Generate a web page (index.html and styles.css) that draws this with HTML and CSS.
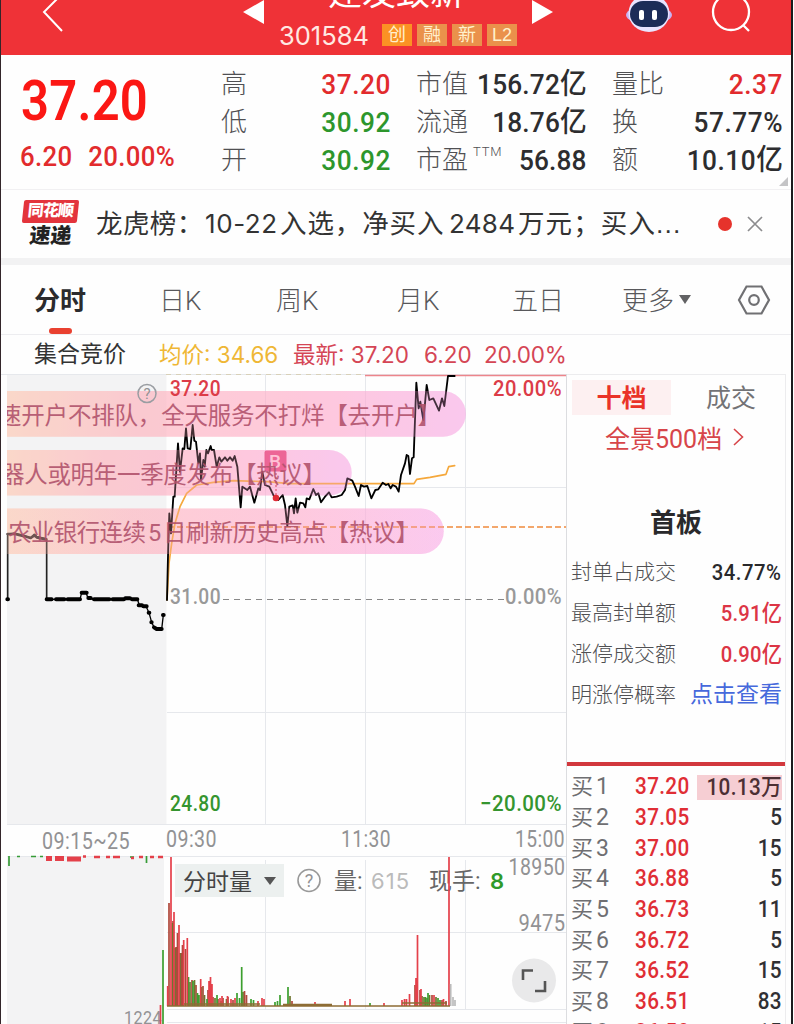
FILE: index.html
```html
<!DOCTYPE html>
<html lang="zh-CN">
<head>
<meta charset="utf-8">
<title>301584</title>
<link rel="stylesheet" href="styles.css">
</head>
<body>
<div class="app">
  <header class="top">
    <svg class="back" viewBox="0 0 24 40"><path d="M21 -3L2 16L20 35" /></svg>
    <svg class="prev" viewBox="0 0 22 24"><path d="M0 12L21 0V24Z"/></svg>
    <div class="title">
      <div class="name">建发致新</div>
      <div class="code"><span class="num">301584</span><i class="tag hot">创</i><i class="tag">融</i><i class="tag">新</i><i class="tag">L2</i></div>
    </div>
    <svg class="next" viewBox="0 0 22 24"><path d="M21 12L0 0V24Z"/></svg>
    <svg class="bot" viewBox="0 0 48 40">
      <ellipse cx="24" cy="21" rx="23" ry="9" fill="#c9b2f2"/>
      <ellipse cx="24" cy="19" rx="20.500" ry="19" fill="#e9e4ff"/>
      <rect x="5" y="7" width="38" height="26" rx="13" fill="#1c2c58"/>
      <rect x="14" y="16" width="5" height="10" rx="2" fill="#fff"/><rect x="27" y="16" width="5" height="10" rx="2" fill="#fff"/>
    </svg>
    <svg class="search" viewBox="0 0 42 42"><circle cx="20" cy="20" r="18"/><path d="M32 33L38 39"/></svg>
  </header>

  <section class="quote">
    <div class="last"><div class="price">37.20</div><div class="chg"><span>6.20</span><span>20.00%</span></div></div>
    <dl class="col c1"><dt>高</dt><dd class="red">37.20</dd><dt>低</dt><dd class="green">30.92</dd><dt>开</dt><dd class="green">30.92</dd></dl>
    <dl class="col c2"><dt>市值</dt><dd>156.72<b>亿</b></dd><dt>流通</dt><dd>18.76<b>亿</b></dd><dt>市盈<sup>TTM</sup></dt><dd>56.88</dd></dl>
    <dl class="col c3"><dt>量比</dt><dd class="red">2.37</dd><dt>换</dt><dd>57.77%</dd><dt>额</dt><dd>10.10<b>亿</b></dd></dl>
    <svg class="corner" viewBox="0 0 9 9"><path d="M9 0V9H0Z"/></svg>
  </section>

  <section class="news">
    <div class="logo"><div class="badge"><span>同花顺</span></div><div class="express">速递</div></div>
    <div class="headline"><span>龙虎榜：</span><span class="n1">10-22</span><span class="t2">入选，净买入</span><span class="n2">2484</span><span class="t3">万元；买入...</span></div>
    <span class="dot"></span>
    <svg class="close" viewBox="0 0 16 16"><path d="M1 1L15 15M15 1L1 15"/></svg>
  </section>

  <nav class="tabs">
    <span class="tab on">分时</span><span class="tab t-day">日K</span><span class="tab t-week">周K</span><span class="tab t-month">月K</span><span class="tab t-five">五日</span><span class="tab t-more">更多</span>
    <svg class="caret" viewBox="0 0 12 9"><path d="M0 0H12L6 9Z"/></svg>
    <svg class="gear" viewBox="0 0 34 30"><path d="M9.500 1.500H24.500L32 15L24.500 28.500H9.500L2 15Z"/><circle cx="17" cy="15" r="4.800"/></svg>
  </nav>

  <div class="info"><span class="auction">集合竞价</span><span class="avg">均价: 34.66</span><span class="new">最新: 37.20</span><span class="d1">6.20</span><span class="d2">20.00%</span></div>

  <main class="main">
    <svg class="chart" viewBox="1 374 566 650" width="566" height="650">
      <defs>
        <linearGradient id="pill" x1="0" x2="1"><stop offset="0" stop-color="#ffc9b2"/><stop offset=".28" stop-color="#ffb3bd"/><stop offset=".65" stop-color="#ffabca"/><stop offset="1" stop-color="#f9abe6"/></linearGradient>
        <g id="pills" fill="url(#pill)">
          <path d="M7 391H443A22.800 22.800 0 0 1 443 436.700H7Z"/>
          <path d="M7 450H329A22.700 22.700 0 0 1 329 495.400H7Z"/>
          <path d="M7 508.500H421A22.700 22.700 0 0 1 421 554H7Z"/>
        </g>
      </defs>
      <rect x="7" y="374" width="159.500" height="450" fill="#f3f3f4"/>
      <rect x="7" y="856" width="157" height="168" fill="#f3f3f4"/>
      <g stroke="#e6e8ec" fill="none">
        <path d="M1 374.500H567M7 824.500H566M7 856.500H566M167 487.500H566M167 712.500H566M167 932.500H566M167 1009.500H566M167 1022.500H566M265.500 375V824M365.500 375V824M465.500 375V824M265.500 860V1009M365.500 860V1009M465.500 860V1009"/>
        <path d="M566.500 374V1024" stroke="#dcdde0"/>
      </g>
      <path d="M365 375.500H566" stroke="#ed858b" stroke-width="1.500"/>
      <path d="M166 374.500H365" stroke="#d8d0b8" stroke-dasharray="5 5"/>
      <path d="M223 599.500H505" stroke="#888" stroke-dasharray="6 5"/>

      <use href="#pills" opacity=".5"/>
      <path d="M168 527H566" stroke="#f08a3c" stroke-width="1.700" stroke-dasharray="6 3"/>

      <g class="lab">
        <text x="170" y="603.500" textLength="51" lengthAdjust="spacingAndGlyphs" fill="#999">31.00</text>
        <text x="505" y="603.500" textLength="57" lengthAdjust="spacingAndGlyphs" fill="#999">0.00%</text>
      </g>

      <g fill="none" stroke-linejoin="round" stroke-linecap="round">
        <g transform="translate(0 370) scale(.33333)">
          <path d="M23 688V492L45 490L75 498L92 504L103 493L110 500L140 507V688" stroke="#222" stroke-width="5"/>
          <path d="M23 492L45 492L75 499L92 504L103 496L110 502L138 508" stroke="#3a2a2c" stroke-width="8"/>
          <path d="M140 688H240L245 668H258L264 684L280 688H370L382 683L392 688H412L418 705L438 709L447 728L455 757L462 772L485 778L490 735" stroke="#000" stroke-width="4"/>
          <path d="M140 688H155M168 688H193M203 688H240M245 668H260M265 684H272M282 688H328M338 688H372M376 685H390M396 688H412M416 706H426M430 709H440M446 728H448M454 757H455M462 772L470 777H485M489 735H491M22 688H24" stroke="#000" stroke-width="12"/>
          <path d="M501 690L507 580L515 520L525 460L540 410L560 370L590 345L640 337L700 332L800 335L870 341H1242L1250 328L1290 322L1338 313L1346 290L1364 287" stroke="#f5a83c" stroke-width="5"/>
          <path d="M501 690L503 600L505 520L508 430L513 490L520 380H524L534 220L540 305L548 235L553 237L558 175L563 235L571 237L578 165L583 212L588 215L595 280L600 250L603 330L610 270L614 290L619 240L624 250L632 228L635 240L642 240L650 290L658 262L664 275L675 262L682 272L690 262L698 272L704 258L712 290L722 412L727 350L742 360L750 350L763 398L775 355L780 360L787 305L795 345L808 350L825 385L835 390L848 375L855 405L862 468L868 410L878 406L882 430L887 385L892 428L900 398L910 400L916 412L920 385L928 388L940 357L948 375L955 370L963 397L975 380L987 367L995 382L1010 380L1025 375L1035 360L1042 325L1057 332L1065 350L1076 378L1083 345L1092 350L1102 348L1114 385L1126 360L1135 358L1148 338L1158 345L1165 342L1172 355L1178 345L1188 350L1196 365L1203 315L1215 280L1220 255L1225 258L1230 312L1236 265L1241 262L1249 38L1256 115L1261 95L1270 150L1275 100L1280 45L1288 90L1300 85L1317 122L1326 85L1333 108L1344 18H1364" stroke="#000" stroke-width="5.500"/>
        </g>
      </g>

      <use href="#pills" opacity=".27"/>
      <rect x="264.500" y="450.500" width="22" height="21" rx="2" fill="#e63f78" opacity=".72"/>
      <text x="269" y="468" class="bmark">B</text>
      <path d="M276 473V496" stroke="#d84465" stroke-dasharray="2 2"/>
      <circle cx="276" cy="498" r="3.300" fill="#e02b36"/>
      <svg x="7" y="374" width="500" height="200" viewBox="7 374 500 200">
        <g class="danmu">
          <text x="-2" y="424" textLength="443">速开户不排队，全天服务不打烊【去开户】</text>
          <text x="1" y="482.500" textLength="325">器人或明年一季度发布【热议】</text>
          <text x="8" y="541" textLength="138">农业银行连续</text><text x="148" y="541">5</text><text x="163" y="541" textLength="256">日刷新历史高点【热议】</text>
        </g>
      </svg>

      <circle cx="147" cy="393.500" r="9" fill="none" stroke="#9a9da2" stroke-width="1.500"/>
      <text x="147" y="399" class="q" font-size="15">?</text>
      <g class="lab">
        <text x="170" y="396" textLength="51" lengthAdjust="spacingAndGlyphs" fill="#dc3c48">37.20</text>
        <text x="493" y="396" textLength="69" lengthAdjust="spacingAndGlyphs" fill="#dc3c48">20.00%</text>
        <text x="170" y="810.500" textLength="51" lengthAdjust="spacingAndGlyphs" fill="#35952f">24.80</text>
        <text x="480" y="810.500" textLength="82" lengthAdjust="spacingAndGlyphs" fill="#35952f">−20.00%</text>
      </g>
      <g class="axis">
        <text x="42" y="849" textLength="88" lengthAdjust="spacingAndGlyphs">09:15~25</text><text x="166" y="847" textLength="51" lengthAdjust="spacingAndGlyphs">09:30</text><text x="341" y="847" textLength="50" lengthAdjust="spacingAndGlyphs">11:30</text><text x="515" y="847" textLength="50" lengthAdjust="spacingAndGlyphs">15:00</text>
        <text x="508.500" y="875" textLength="57" lengthAdjust="spacingAndGlyphs">18950</text><text x="518.500" y="931" textLength="47" lengthAdjust="spacingAndGlyphs">9475</text><text x="124" y="1023.500" textLength="38" lengthAdjust="spacingAndGlyphs" class="small">1224</text>
      </g>

      <rect x="175" y="864" width="109" height="33" fill="#ecf0ef"/>
      <text x="183" y="889.500" textLength="69" class="vt" fill="#444">分时量</text>
      <path d="M264 877H276L270 885Z" fill="#555"/>
      <circle cx="309" cy="880.500" r="11" fill="none" stroke="#999" stroke-width="1.600"/><text x="309" y="887" class="q" font-size="18">?</text>
      <text x="334" y="888.500" class="vt" fill="#666">量:</text><text x="371" y="888.500" textLength="38" class="vn" fill="#bbb">615</text>
      <text x="429" y="888.500" class="vt" fill="#666">现手:</text><text x="490" y="888.500" class="vn cur" fill="#2f9a2a">8</text>

      <g fill="none" stroke-width="1.700">
        <path stroke="#b0483b" d="M169 1006V903M173 1006V921M176 1006V947M177.500 1006V933M181 1006V953M182.500 1006V945M185.500 1006V949M192 1006V980M196 1006V985M203 1006V986M208 1006V990M213 1006V997M218 1006V999M223 1006V998M228 1006V997M233 1006V1000M244.500 1006V991M246.500 1006V995M292 1006V1001M415 1006V985M420 1006V990M432 1006V995M442 1006V1000M446 1006V1001"/>
        <path stroke="#6f742e" d="M172.500 1006V923M175 1006V948M180 1006V953M190 1006V982M194.500 1006V980M201.500 1006V987M204.500 1006V995M215 1006V998M226.500 1006V999M243 1006V992M290 1006V996M422 1006V996M424 1006V997M427 1006V998M429.500 1006V995M436 1006V997"/>
        <path stroke="#3c9f2f" d="M188.500 1006V977M193 1006V981M197.500 1006V993M199 1006V995M207 1006V999M217 1006V995M221 1006V1001M237 1006V993M239.500 1006V998M241.700 1006V967M251 1006V999M253.500 1006V1000M275 1006V1002M277.500 1006V1001M280 1006V995M288 1006V987M370 1006V1003M425.500 1006V997M428 1006V993M438 1006V998M440 1006V1000M163 1024V950"/>
        <path stroke="#e4404a" d="M167.700 1006V986M171 1006V857M174 1006V912M179 1006V925M183.700 1006V940M187.300 1006V938M200.700 1006V979M209 1006V981M210.500 1006V977M212 1006V984M220 1006V998M222 1006V996M227.500 1006V996M231 1006V999M235 1006V998M258 1006V1001M262 1006V998M264 1006V999M315 1006V1002M345 1006V1001M350 1006V999M384 1006V1003M402 1006V1000M404.500 1006V999M406.500 1006V999M409.500 1006V994M416 1006V978M417.500 1006V935M421 1006V989M434 1006V995M443.500 1006V999M449 1006V857M160.500 1024V1005"/>
        <path stroke="#bbb" d="M450.700 1006V984M453 1006V997M455 1006V1000"/>
        <path stroke="#8d6c34" d="M167 1006H450M184 1004H260M283 1004.500H332M402 1003H447"/>
        <path stroke="#369b36" d="M9 856V866M146.500 856V863M17 856.500H20M31 856.500H36M40 856.500H43M130 857H134"/>
      </g>
      <path d="M46 858.500H52M55 858.500H64M67 859H81" stroke="#e4404a" stroke-width="5" fill="none"/>
      <path d="M83 856.500H86M94 857H100M106 857H110M113 857H120M131 858H134M139 857H143M150 857H154M158 857H163" stroke="#e4404a" stroke-width="2.500" fill="none"/>
      <circle cx="534" cy="980.500" r="22" fill="#e9e9ea"/>
      <path d="M523 980V970.500H533M545 981V991H535" fill="none" stroke="#555" stroke-width="2.600"/>
    </svg>

    <aside class="side">
      <div class="switch"><span class="sel">十档</span><span class="deal">成交</span></div>
      <div class="full"><span>全景500档</span><svg viewBox="0 0 11 18"><path d="M1 1L9.500 9L1 17"/></svg></div>
      <div class="board">首板</div>
      <div class="facts">
        <div><span>封单占成交</span><b>34.77%</b></div>
        <div><span>最高封单额</span><b class="r">5.91<em>亿</em></b></div>
        <div><span>涨停成交额</span><b class="r">0.90<em>亿</em></b></div>
        <div><span>明涨停概率</span><a>点击查看</a></div>
      </div>
      <div class="book">
        <div><span>买<i>1</i></span><b>37.20</b><strong class="hl"><u>10.13<em>万</em></u></strong></div>
        <div><span>买<i>2</i></span><b>37.05</b><strong><u>5</u></strong></div>
        <div><span>买<i>3</i></span><b>37.00</b><strong><u>15</u></strong></div>
        <div><span>买<i>4</i></span><b>36.88</b><strong><u>5</u></strong></div>
        <div><span>买<i>5</i></span><b>36.73</b><strong><u>11</u></strong></div>
        <div><span>买<i>6</i></span><b>36.72</b><strong><u>5</u></strong></div>
        <div><span>买<i>7</i></span><b>36.52</b><strong><u>15</u></strong></div>
        <div><span>买<i>8</i></span><b>36.51</b><strong><u>83</u></strong></div>
        <div><span>买<i>9</i></span><b>36.50</b><strong><u>15</u></strong></div>
      </div>
    </aside>
  </main>
</div>
</body>
</html>
```
FILE: styles.css
```css
* { box-sizing: border-box; }
body { margin: 0; background: #fff; font-family: "Liberation Sans", "Noto Sans CJK SC", sans-serif; color: #333; }
i, em { font-style: normal; }
u { text-decoration: none; }
svg { display: block; flex: none; overflow: hidden; }
.app { width: 793px; height: 1024px; overflow: hidden; border-left: 1px solid #33262a; border-right: 2px solid #1b1b1d; background: #fefefe; }

.top { height: 55px; background: #ef3237; display: flex; align-items: flex-start; overflow: hidden; }
.back { width: 24px; height: 40px; margin: -4px 0 0 41px; fill: none; stroke: #fff; stroke-width: 2; overflow: visible; }
.prev { width: 22px; height: 24px; margin-left: 177px; fill: #fff; }
.title { width: 266px; margin-top: -30px; margin-left: 1px; }
.name { height: 46px; line-height: 46px; font-size: 34px; color: #fff; text-align: center; margin-left: -6px; }
.code { display: flex; align-items: center; height: 38px; padding-left: 13px; }
.num { font: 25.500px "Inter", sans-serif; color: #ffe9e3; width: 103px; letter-spacing: 0; }
.tag { width: 30px; height: 22px; line-height: 23px; margin-right: 5px; background: #ea914b; color: #fff0cc; font-size: 18px; text-align: center; }
.tag.hot { background: #fb9224; }
.next { width: 22px; height: 24px; fill: #fff; }
.bot { width: 48px; height: 40px; margin: -6px 0 0 71px; }
.search { width: 42px; height: 42px; margin: -8px 0 0 38px; fill: none; stroke: #fff; stroke-width: 2.300; }

.quote { position: relative; height: 135px; border-bottom: 1px solid #f1f0f2; display: flex; padding-top: 10px; font-family: Roboto, "Noto Sans CJK SC", sans-serif; }
.last { width: 220px; padding-left: 20px; color: #fb1714; }
.price { height: 70px; line-height: 72px; font-size: 55px; font-weight: 600; letter-spacing: .3px; transform: scaleX(.89); transform-origin: left; }
.chg { display: flex; gap: 17px; font-size: 28px; font-weight: 500; line-height: 40px; color: #e22b2d; letter-spacing: .4px; margin-top: 2px; margin-left: -1px; transform: scaleX(.92); transform-origin: left; }
.col { margin: 0; display: grid; grid-template-columns: auto minmax(0, 1fr); grid-auto-rows: 38px; line-height: 39px; }
.col dt { font-size: 26px; font-weight: 300; color: #505053; white-space: nowrap; }
.col dd { margin: 0 -1px 0 0; font-size: 28.500px; font-weight: 500; letter-spacing: .6px; text-align: right; white-space: nowrap; color: #2d2d2f; transform: scaleX(.92); transform-origin: right; }
.col b { font-size: 29px; font-weight: 500; letter-spacing: 0; }
.col .red { color: #e22b2d; }
.col .green { color: #2d962c; }
.c1 { width: 169px; }
.c2 { width: 170px; margin-left: 26px; }
.c3 { width: 170px; margin-left: 26px; }
.c2 dd { margin-left: -60px; letter-spacing: .2px; }
.col sup { font-size: 13px; line-height: 1; letter-spacing: .8px; margin-left: 5px; vertical-align: 13px; }
.corner { position: absolute; right: 3px; bottom: 3px; width: 9px; height: 9px; fill: #c4c4c6; }

.news { height: 75px; border-bottom: 7px solid #f2f2f3; display: flex; align-items: center; }
.logo { width: 74px; padding-left: 22px; }
.badge { width: 55px; height: 23px; background: #e3343c; border-radius: 2px; transform: skewX(-6deg); color: #fff; font-size: 16px; font-weight: 900; line-height: 22px; text-align: center; letter-spacing: -.8px; white-space: nowrap; }
.express { width: 55px; font-size: 21px; line-height: 25px; font-weight: 900; text-align: center; transform: skewX(-6deg); color: #222; }
.headline { display: flex; flex: none; width: 608px; margin-left: 21px; font-size: 26.500px; color: #333; white-space: nowrap; line-height: 40px; }
.headline span:first-child { width: 109px; letter-spacing: .4px; }
.headline .n1, .headline .n2 { font-family: Inter, sans-serif; font-size: 26px; }
.headline .n1 { width: 75px; letter-spacing: .6px; }
.headline .t2 { width: 169px; letter-spacing: .9px; }
.headline .n2 { width: 69px; letter-spacing: .3px; }
.headline .t3 { letter-spacing: 1.100px; }
.dot { width: 14px; height: 14px; border-radius: 50%; background: #e6332c; margin-left: 14px; }
.close { width: 16px; height: 16px; margin-left: 15px; fill: none; stroke: #8c8c8e; stroke-width: 1.700; }

.tabs { height: 70px; border-bottom: 1px solid #ededf0; display: flex; align-items: center; font-size: 26px; color: #58585b; padding-left: 33px; font-family: Roboto, "Noto Sans CJK SC", sans-serif; font-weight: 300; }
.tab { position: relative; width: 125px; line-height: 42px; height: 40px; white-space: nowrap; }
.tab.on { color: #2b2b2d; font-weight: 700; }
.tab.on::after { content: ""; position: absolute; left: 15px; bottom: -14px; width: 23px; height: 6px; border-radius: 3px; background: #e94130; }
.t-day { width: 117px; }
.t-week { width: 121px; }
.t-month { width: 115px; }
.t-five { width: 110px; }
.t-more { width: 57px; }
.caret { width: 12px; height: 9px; fill: #626264; }
.gear { width: 34px; height: 30px; margin-left: 46px; fill: none; stroke: #707073; stroke-width: 2.200; }

.info { height: 39px; display: flex; align-items: center; padding-left: 33px; font: 22.500px "Inter", "Noto Sans CJK SC", sans-serif; white-space: nowrap; line-height: 41px; }
.info .auction { width: 125px; font-size: 23px; }
.info .avg { width: 134px; color: #efb735; }
.info .new { width: 131px; color: #d54655; }
.info .d1 { width: 60px; color: #d54655; }
.info .d2 { color: #d54655; letter-spacing: -.2px; }

.main { display: flex; height: 650px; }
.chart { font-family: Roboto, "Noto Sans CJK SC", sans-serif; }
.lab text { font-size: 22.500px; font-weight: 500; letter-spacing: .5px; }
.axis text { font-size: 23px; fill: #929294; letter-spacing: .5px; }
.axis text.small { font-size: 19px; }
.danmu text { font-size: 23.500px; fill: #b0506a; opacity: .88; }
.bmark { font-size: 19px; font-weight: 500; fill: #ffc2d6; }
.q { text-anchor: middle; fill: #929294; }
.vt { font-size: 23px; }
.vn { font-size: 22px; font-family: Inter, sans-serif; }
.cur { font-weight: 600; }

.side { width: 219px; border-right: 1px solid #ececee; border-top: 1px solid #ececee; overflow: hidden; font-family: Roboto, "Noto Sans CJK SC", sans-serif; }
.switch { display: flex; height: 41px; padding: 5px 0 0 5px; font-size: 25px; line-height: 37px; }
.sel { width: 99px; height: 35px; background: #fdf0f1; color: #ea3328; font-weight: 700; text-align: center; }
.deal { margin-left: 35px; color: #737376; }
.full { height: 41px; display: flex; align-items: center; padding-left: 38px; font-size: 25px; color: #d74549; }
.full svg { width: 11px; height: 18px; margin-left: 11px; fill: none; stroke: #d74549; stroke-width: 1.600; }
.board { margin-top: 39px; height: 54px; line-height: 54px; text-align: center; font-size: 26px; font-weight: 700; color: #29292b; }
.facts { padding: 1px 3px 0 4px; height: 216px; border-bottom: 4px solid #d2383d; }
.facts div { display: flex; justify-content: space-between; height: 41px; align-items: center; line-height: 40px; white-space: nowrap; }
.facts span { font-size: 21px; font-weight: 300; color: #505053; }
.facts b { font-size: 22.500px; font-weight: 500; color: #29292b; letter-spacing: .6px; transform: scaleX(.9); transform-origin: right; }
.facts b.r { color: #dc3545; letter-spacing: .2px; }
.facts em { font-size: 22.500px; }
.facts a { font-size: 23px; color: #4669dc; }
.book { padding: 6px 3px 0 4px; }
.book div { display: grid; grid-template-columns: 64px 62px 1fr; height: 30.700px; line-height: 30px; align-items: center; }
.book span { font-size: 22px; color: #6f6f72; }
.book i { font-size: 23px; margin-left: 3px; }
.book b { font-size: 23px; font-weight: 500; color: #e02e35; letter-spacing: .4px; transform: scaleX(.9); transform-origin: left; }
.book strong { font-size: 23px; font-weight: 500; color: #303033; text-align: right; }
.book u { display: inline-block; letter-spacing: .4px; transform: scaleX(.9); transform-origin: right; }
.book strong.hl { background: #f6ced3; height: 25px; line-height: 25px; color: #4c2f33; }
.book em { font-size: 23px; }
```
